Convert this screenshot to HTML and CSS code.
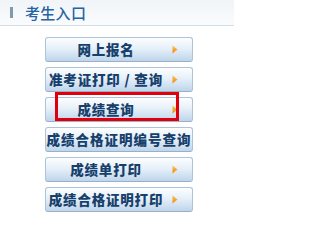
FILE: index.html
```html
<!DOCTYPE html>
<html lang="zh">
<head>
<meta charset="utf-8">
<link rel="stylesheet" href="styles.css">
</head>
<body>
<div class="panel">
  <div class="head"><span class="bar"></span><span class="title">考生入口</span></div>
  <div class="list">
    <a class="btn"><span class="label">网上报名</span><svg class="arrow" width="6" height="9" viewBox="0 0 6 9"><defs><linearGradient id="g" x1="0" y1="0" x2="0" y2="1"><stop offset="0" stop-color="#ffc35a"/><stop offset="1" stop-color="#ee8a00"/></linearGradient></defs><polygon points="0.5,0.5 5.5,4.5 0.5,8.5" fill="url(#g)"/></svg></a>
    <a class="btn"><span class="label">准考证打印 / 查询</span><svg class="arrow" width="6" height="9" viewBox="0 0 6 9"><polygon points="0.5,0.5 5.5,4.5 0.5,8.5" fill="url(#g)"/></svg></a>
    <a class="btn current"><span class="label">成绩查询</span><svg class="arrow" width="6" height="9" viewBox="0 0 6 9"><polygon points="0.5,0.5 5.5,4.5 0.5,8.5" fill="url(#g)"/></svg><span class="mark"></span></a>
    <a class="btn wide"><span class="label">成绩合格证明编号查询</span></a>
    <a class="btn"><span class="label">成绩单打印</span><svg class="arrow" width="6" height="9" viewBox="0 0 6 9"><polygon points="0.5,0.5 5.5,4.5 0.5,8.5" fill="url(#g)"/></svg></a>
    <a class="btn"><span class="label">成绩合格证明打印</span><svg class="arrow" width="6" height="9" viewBox="0 0 6 9"><polygon points="0.5,0.5 5.5,4.5 0.5,8.5" fill="url(#g)"/></svg></a>
  </div>
</div>
</body>
</html>
```
FILE: styles.css
```css
html, body {
  margin: 0;
  padding: 0;
  background: #ffffff;
}
.panel {
  width: 234px;
  font-family: "Noto Sans CJK SC", "Noto Sans", sans-serif;
}
.head {
  height: 26px;
  box-sizing: border-box;
  border-bottom: 1px solid #d3dee8;
  background: linear-gradient(#f1f5f8, #fafbfd);
  display: flex;
  align-items: center;
  padding-left: 10px;
}
.bar {
  width: 3px;
  height: 11px;
  background: #8199ad;
  margin-right: 12px;
}
.title {
  font-size: 15px;
  color: #2463a4;
  letter-spacing: 0.3px;
  font-weight: 500;
  line-height: 1;
}
.list {
  display: flex;
  flex-direction: column;
  gap: 5px;
  padding: 11px 0 0 45px;
}
.btn {
  position: relative;
  width: 148px;
  height: 25px;
  box-sizing: border-box;
  border: 1px solid #adc3d8;
  border-bottom-color: #98b1c9;
  border-radius: 3px;
  background: linear-gradient(#fdfeff 0%, #e6f0f9 45%, #bfd5eb 100%);
  display: flex;
  align-items: center;
  padding-right: 14px;
  color: #173f6c;
  font-weight: 900;
  font-size: 13.5px;
  letter-spacing: 0.8px;
  text-decoration: none;
}
.label {
  flex: 1;
  text-align: center;
  margin-right: 6px;
  line-height: 1;
  white-space: nowrap;
}
.arrow {
  flex: none;
  display: block;
}
.wide {
  padding: 0;
  letter-spacing: 1px;
}
.wide .label {
  margin: 0;
}
.mark {
  position: absolute;
  left: 9px;
  top: -6px;
  width: 124px;
  height: 29px;
  box-sizing: border-box;
  border: 3px solid #e0000b;
}
```
